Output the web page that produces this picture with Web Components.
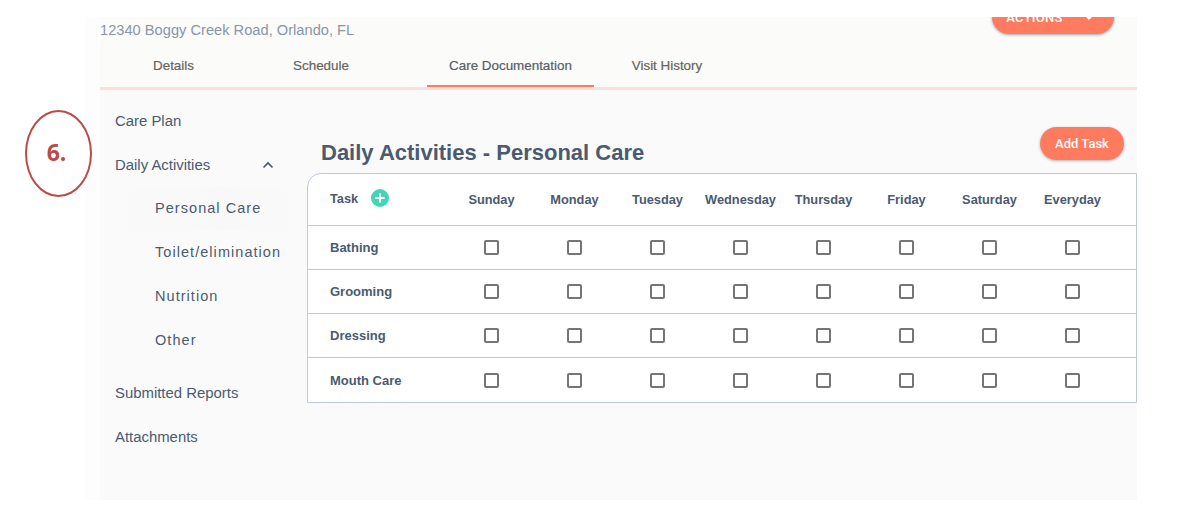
<!DOCTYPE html>
<html>
<head>
<meta charset="utf-8">
<title>Daily Activities</title>
<style>
	html, body { margin: 0; background: #fff; }
	body { height: 508px; overflow: hidden; font-family: "Liberation Sans", Arial, sans-serif; }
</style>
</head>
<body>
<care-page>
	<step-callout slot="callout">6.</step-callout>
	<visit-header slot="header" address="12340 Boggy Creek Road, Orlando, FL">
		<tab-item style="width:147px">Details</tab-item>
		<tab-item style="width:148px">Schedule</tab-item>
		<tab-item style="width:167px;margin-left:32px" active>Care Documentation</tab-item>
		<tab-item style="width:146px">Visit History</tab-item>
	</visit-header>
	<side-nav slot="nav">
		<nav-item>Care Plan</nav-item>
		<nav-item open>Daily Activities</nav-item>
		<nav-item sub selected>Personal Care</nav-item>
		<nav-item sub>Toilet/elimination</nav-item>
		<nav-item sub>Nutrition</nav-item>
		<nav-item sub>Other</nav-item>
		<nav-item style="margin-top:8px">Submitted Reports</nav-item>
		<nav-item>Attachments</nav-item>
	</side-nav>
	<task-section slot="main" heading="Daily Activities - Personal Care">
		<task-table>
			<task-row>Bathing</task-row>
			<task-row>Grooming</task-row>
			<task-row>Dressing</task-row>
			<task-row>Mouth Care</task-row>
		</task-table>
	</task-section>
</care-page>

<script>
const DAYS = ["Sunday", "Monday", "Tuesday", "Wednesday", "Thursday", "Friday", "Saturday", "Everyday"];

// Same columns for the head and the rows
const GRID_COLUMNS = "142px repeat(8, 83px) 1fr";

/**
 * Small helper so each element only has to give its html.
 */
class ShadowElement extends HTMLElement {
	constructor () {
		super();
		this.attachShadow({mode: "open"}).innerHTML = this.render();
	}

	render () {
		return `<slot></slot>`;
	}
}

class CarePage extends ShadowElement {
	render () {
		return `
		<style>
			:host { display: block; padding: 17px 51px 8px 85px; position: relative; }
			.panel { height: 483px; background: #fdfdfd; padding-left: 15px; overflow: hidden; }
			.body { display: flex; background: #fafafa; height: 410px; }
		</style>
		<slot name="callout"></slot>
		<div class="panel">
			<slot name="header"></slot>
			<div class="body">
				<slot name="nav"></slot>
				<slot name="main"></slot>
			</div>
		</div>`;
	}
}

// The red hand drawn circle lies over the page, outside the panel
class StepCallout extends ShadowElement {
	render () {
		return `
		<style>
			:host {
				position: absolute; left: 24.5px; top: 109.5px;
				width: 67px; height: 87px;
				box-sizing: border-box;
				border: 2.5px solid #bc4a48;
				border-radius: 50%;
				display: flex; align-items: center; justify-content: center;
				color: #bc4a48;
				font: bold 23px "Open Sans", "Liberation Sans", sans-serif;
				padding: 0 3px 3px 0;
			}
		</style>
		<slot></slot>`;
	}
}

class VisitHeader extends ShadowElement {
	render () {
		return `
		<style>
			:host { display: block; background: #fbfbf9; height: 70px; border-bottom: 3px solid #fbdfd8; overflow: hidden; position: relative; }
			.top { display: flex; justify-content: space-between; height: 26px; padding-right: 23px; }
			.address { color: #8a96a6; font-size: 14.67px; line-height: 26px; }
			.tabs { display: flex; height: 44px; }
			.actions {
				width: 122px; height: 34px; margin-top: -17px; box-sizing: border-box; padding-right: 5px;
				background: #ff7b60; color: #fff;
				border-radius: 17px;
				box-shadow: 0 1px 3px rgba(0,0,0,.35);
				display: flex; align-items: center; justify-content: center; gap: 20px;
				font: 500 13px Roboto, sans-serif; letter-spacing: .3px;
			}
		</style>
		<div class="top">
			<div class="address">${this.getAttribute("address")}</div>
			<div class="actions">ACTIONS
				<svg width="12" height="8" viewBox="0 0 12 8"><path d="M2 1.5 6 5.5 10 1.5" fill="none" stroke="#fff" stroke-width="2"/></svg>
			</div>
		</div>
		<div class="tabs"><slot></slot></div>`;
	}
}

class TabItem extends ShadowElement {
	render () {
		return `
		<style>
			:host { display: flex; align-items: center; justify-content: center; box-sizing: border-box;
				height: 44px; padding-top: 3px; border-bottom: 2px solid transparent;
				color: #66645f; font-size: 13.4px; -webkit-text-stroke: .2px; white-space: nowrap; }
			:host([active]) { border-bottom-color: #ff7b60; color: #555e68; }
		</style>
		<slot></slot>`;
	}
}

class SideNav extends ShadowElement {
	render () {
		return `
		<style>
			:host { display: block; flex: none; width: 207px; box-sizing: border-box; padding: 9px 0 0 0; }
		</style>
		<slot></slot>`;
	}
}

class NavItem extends ShadowElement {
	render () {
		return `
		<style>
			:host { display: flex; align-items: center; height: 44px; padding-left: 15px; color: #4a5a70; font-size: 14.9px; }
			:host([sub]) { padding-left: 55px; padding-bottom: 2px; height: 42px; letter-spacing: 1.05px; font-size: 14.5px; }
			:host([selected]) { background: linear-gradient(90deg, #fafafa, #f8f8f8 60%, #fafafa); }
			svg { display: none; margin-left: auto; margin-right: 33px; }
			:host([open]) svg { display: block; }
		</style>
		<slot></slot>
		<svg width="12" height="8" viewBox="0 0 12 8"><path d="M1.5 6.5 6 2 10.5 6.5" fill="none" stroke="#46566c" stroke-width="1.6"/></svg>`;
	}
}

class TaskSection extends ShadowElement {
	render () {
		return `
		<style>
			:host { display: block; flex: 1; min-width: 0; }
			.head { display: flex; justify-content: space-between; height: 83px; box-sizing: border-box; padding: 37px 13px 0 14px; }
			h2 { margin: 12px 0 0; color: #4a5a70; font-size: 22px; line-height: 28px; font-weight: bold; }
		</style>
		<div class="head">
			<h2>${this.getAttribute("heading")}</h2>
			<pill-button>Add Task</pill-button>
		</div>
		<slot></slot>`;
	}
}

class PillButton extends ShadowElement {
	render () {
		return `
		<style>
			:host { display: flex; align-items: center; justify-content: center; width: 84px; height: 33px;
				background: #ff7b60; color: #fff; border-radius: 17px;
				box-shadow: 0 1px 3px rgba(0,0,0,.3);
				font: 500 13px Roboto, sans-serif; }
		</style>
		<slot></slot>`;
	}
}

class TaskTable extends ShadowElement {
	render () {
		const heads = DAYS.map(d => `<div class="day">${d}</div>`).join("");
		return `
		<style>
			:host { display: block; background: #fff; border: 1px solid #bccbdf; border-top-left-radius: 14px; }
			.head { display: grid; grid-template-columns: ${GRID_COLUMNS}; height: 50.5px; align-items: center;
				color: #4a5a70; font-size: 12.8px; font-weight: bold; border-bottom: 1px solid #bccbdf; }
			.task { display: flex; align-items: center; gap: 13px; padding-left: 22px; padding-bottom: 2px; }
			.day { text-align: center; white-space: nowrap; }
			.plus { flex: none; }
		</style>
		<div class="head">
			<div class="task">Task
				<svg class="plus" width="18" height="18" viewBox="0 0 18 18"><circle cx="9" cy="9" r="9" fill="#45d4b8"/><path d="M9 4.5v9M4.5 9h9" stroke="#fff" stroke-width="2"/></svg>
			</div>
			${heads}
		</div>
		<slot></slot>`;
	}
}

class TaskRow extends ShadowElement {
	render () {
		const cells = DAYS.map(() => `<div class="cell"><input type="checkbox"></div>`).join("");
		return `
		<style>
			:host { display: grid; grid-template-columns: ${GRID_COLUMNS}; height: 43.25px; align-items: center;
				color: #4a5a70; font-size: 13px; font-weight: bold; border-bottom: 1px solid #bccbdf; box-sizing: content-box; }
			:host(:last-child) { border-bottom: 0; padding-top: 2px; height: 41.25px; }
			.name { padding-left: 22px; }
			.cell { display: flex; justify-content: center; }
			input { appearance: none; margin: 0; width: 15px; height: 15px; box-sizing: border-box;
				border: 2px solid #757575; border-radius: 2px; background: #fff; }
		</style>
		<div class="name"><slot></slot></div>
		${cells}`;
	}
}

window.customElements.define("care-page", CarePage);
window.customElements.define("step-callout", StepCallout);
window.customElements.define("visit-header", VisitHeader);
window.customElements.define("tab-item", TabItem);
window.customElements.define("side-nav", SideNav);
window.customElements.define("nav-item", NavItem);
window.customElements.define("task-section", TaskSection);
window.customElements.define("pill-button", PillButton);
window.customElements.define("task-table", TaskTable);
window.customElements.define("task-row", TaskRow);
</script>
</body>
</html>
